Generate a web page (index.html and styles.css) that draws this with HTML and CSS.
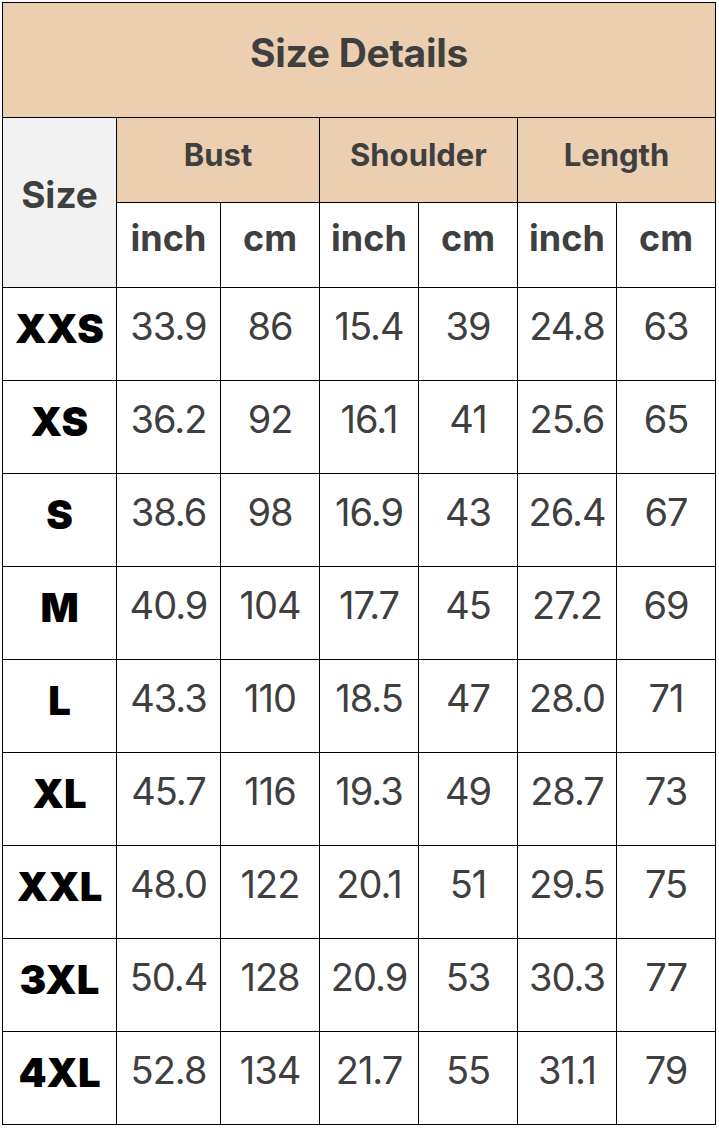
FILE: index.html
```html
<!DOCTYPE html>
<html lang="en">
<head>
<meta charset="utf-8">
<title>Size Details</title>
<link rel="stylesheet" href="styles.css">
</head>
<body>
<table class="size-table">
  <colgroup>
    <col class="c-size"><col class="c-first"><col class="c"><col class="c"><col class="c"><col class="c"><col class="c">
  </colgroup>
  <thead>
    <tr class="row-title"><th colspan="7" class="title">Size Details</th></tr>
    <tr class="row-head">
      <th rowspan="2" class="size-head">Size</th>
      <th colspan="2" class="group">Bust</th>
      <th colspan="2" class="group">Shoulder</th>
      <th colspan="2" class="group">Length</th>
    </tr>
    <tr class="row-head">
      <th class="unit">inch</th><th class="unit">cm</th>
      <th class="unit">inch</th><th class="unit">cm</th>
      <th class="unit">inch</th><th class="unit">cm</th>
    </tr>
  </thead>
  <tbody>
    <tr><th class="label">XXS</th><td>33.9</td><td>86</td><td>15.4</td><td>39</td><td>24.8</td><td>63</td></tr>
    <tr><th class="label">XS</th><td>36.2</td><td>92</td><td>16.1</td><td>41</td><td>25.6</td><td>65</td></tr>
    <tr><th class="label">S</th><td>38.6</td><td>98</td><td>16.9</td><td>43</td><td>26.4</td><td>67</td></tr>
    <tr><th class="label">M</th><td>40.9</td><td>104</td><td>17.7</td><td>45</td><td>27.2</td><td>69</td></tr>
    <tr><th class="label">L</th><td>43.3</td><td>110</td><td>18.5</td><td>47</td><td>28.0</td><td>71</td></tr>
    <tr><th class="label">XL</th><td>45.7</td><td>116</td><td>19.3</td><td>49</td><td>28.7</td><td>73</td></tr>
    <tr><th class="label">XXL</th><td>48.0</td><td>122</td><td>20.1</td><td>51</td><td>29.5</td><td>75</td></tr>
    <tr><th class="label">3XL</th><td>50.4</td><td>128</td><td>20.9</td><td>53</td><td>30.3</td><td>77</td></tr>
    <tr><th class="label">4XL</th><td>52.8</td><td>134</td><td>21.7</td><td>55</td><td>31.1</td><td>79</td></tr>
  </tbody>
</table>
</body>
</html>
```

FILE: styles.css
```css
html, body {
  margin: 0;
  padding: 0;
  background: #ffffff;
}
body {
  padding: 2px;
  font-family: Inter, "Open Sans", "Liberation Sans", sans-serif;
  color: #3f3f3f;
}
.size-table {
  border-collapse: collapse;
  table-layout: fixed;
  width: 714px;
}
.c-size { width: 114px; }
.c-first { width: 104px; }
.c { width: 99px; }
.size-table th,
.size-table td {
  border: 1px solid #000;
  padding: 0;
  text-align: center;
  vertical-align: middle;
  line-height: 1;
}
.size-table .title {
  height: 98px;
  padding-bottom: 16px;
  background: #ebcfb0;
  font-size: 39px;
  font-weight: 700;
  letter-spacing: -0.3px;
}
.size-table .group {
  height: 72px;
  padding-bottom: 12px;
  background: #ebcfb0;
  font-size: 31px;
  font-weight: 700;
}
.size-table .size-head {
  padding-bottom: 16px;
  background: #f2f2f2;
  font-size: 37px;
  font-weight: 700;
}
.size-table .unit {
  height: 70px;
  padding-bottom: 14px;
  background: #fff;
  font-size: 36px;
  font-weight: 700;
}
.size-table .label {
  height: 82px;
  padding-bottom: 10px;
  font-size: 40px;
  font-weight: 900;
  color: #000;
}
.size-table td {
  height: 76px;
  padding-bottom: 16px;
  font-size: 38px;
  font-weight: 400;
  letter-spacing: -1px;
}
```
